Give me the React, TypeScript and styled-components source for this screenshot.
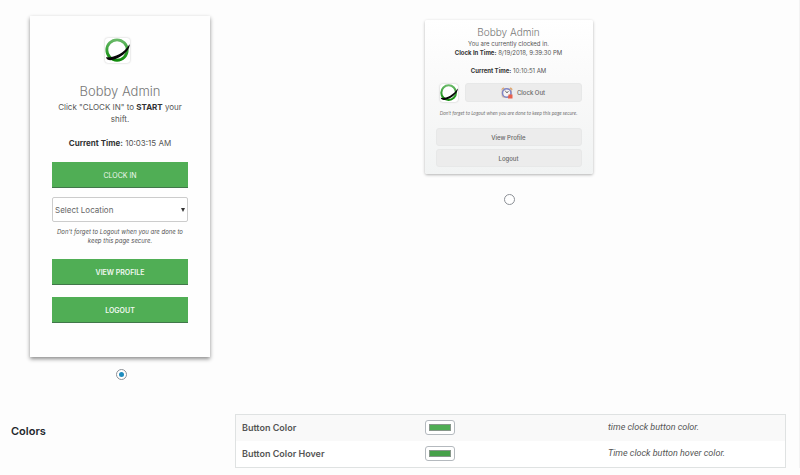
import React from 'react';
import styled, { createGlobalStyle } from 'styled-components';

const GlobalStyle = createGlobalStyle`
  * { box-sizing: border-box; }
  body {
    margin: 0;
    background: #fdfdfd;
    color: #555;
    font-family: Inter, "Liberation Sans", sans-serif;
  }
  button, select, input { font-family: inherit; margin: 0; }
`;

const Page = styled.main`
  display: flex;
  flex-direction: column;
  gap: 34px;
  padding-top: 16px;
  border-right: 1px solid #f3f3f3;
`;

const Styles = styled.section`
  display: grid;
  grid-template-columns: 1fr 1fr;
  column-gap: 20px;
  align-items: start;
  padding-left: 30px;
`;

const Option = styled.div<{ $width: number; $top?: number; $gap: number }>`
  display: flex;
  flex-direction: column;
  align-items: center;
  width: ${(p) => p.$width}px;
  padding-top: ${(p) => p.$top ?? 0}px;
  gap: ${(p) => p.$gap}px;
`;

const Radio = styled.input`
  appearance: none;
  display: grid;
  place-items: center;
  width: 11px;
  height: 11px;
  margin-left: 2px !important;
  border: 1px solid #8c9096;
  border-radius: 50%;
  background: #fff;
  &:checked::before {
    content: "";
    width: 5px;
    height: 5px;
    border-radius: 50%;
    background: #1e8cbe;
  }
`;

const TallCard = styled.article`
  display: flex;
  flex-direction: column;
  align-items: center;
  width: 100%;
  padding: 22px 22px 34px;
  background: #fefefe;
  box-shadow: 0 2px 4px rgba(0, 0, 0, 0.45);
  text-align: center;
`;

const CompactCard = styled.article`
  display: flex;
  flex-direction: column;
  width: 100%;
  padding: 5px 11px 7px;
  border-radius: 2px;
  background: linear-gradient(#ffffff, #f9f9f9 45%, #f1f3f3);
  box-shadow: 0 1px 3px rgba(0, 0, 0, 0.3);
  text-align: center;
`;

const LogoSlot = styled.div`
  display: flex;
  padding-right: 5px;
`;

const LogoSvg = styled.svg<{ $size: number }>`
  flex: none;
  width: ${(p) => p.$size}px;
  height: ${(p) => p.$size}px;
  border-radius: 3px;
  background: #fff;
  box-shadow: 0 0 2px rgba(0, 0, 0, 0.25);
`;

const UserName = styled.h2<{ $size: number; $line: number }>`
  margin: 0;
  color: #777;
  font-size: ${(p) => p.$size}px;
  line-height: ${(p) => p.$line}px;
  font-weight: 300;
`;

const Message = styled.p<{ $size: number; $line: number }>`
  margin: 0;
  font-size: ${(p) => p.$size}px;
  line-height: ${(p) => p.$line}px;
  strong { color: #333; font-weight: 700; }
`;

const Note = styled.p<{ $compact?: boolean }>`
  margin: 0;
  padding-top: ${(p) => (p.$compact ? 3 : 5)}px;
  color: ${(p) => (p.$compact ? '#777' : '#555')};
  font-family: ${(p) => (p.$compact ? 'Lato, sans-serif' : 'inherit')};
  font-size: ${(p) => (p.$compact ? 5 : 6)}px;
  line-height: 9px;
  font-style: italic;
  white-space: nowrap;
`;

const GreenButton = styled.button<{ $weight: number }>`
  width: 100%;
  height: 26px;
  padding: 1px 0 0;
  border: 0;
  border-bottom: 1px solid #41774a;
  background: #50ae55;
  color: #f0f8f0;
  font-size: 7px;
  font-weight: ${(p) => p.$weight};
`;

const TallTop = styled.div`
  display: flex;
  flex-direction: column;
  gap: 12px;
  padding: 18px 0 13px;
`;

const TallActions = styled.div`
  display: flex;
  flex-direction: column;
  gap: 9px;
  width: 100%;
`;

const TallLinks = styled.div`
  display: flex;
  flex-direction: column;
  gap: 12px;
  width: 100%;
  padding-top: 14px;
`;

const SelectBox = styled.div`
  position: relative;
  display: flex;
  svg {
    position: absolute;
    top: 50%;
    right: 3px;
    width: 4px;
    height: 4px;
    transform: translateY(-50%);
    pointer-events: none;
  }
`;

const Select = styled.select`
  appearance: none;
  width: 100%;
  height: 25px;
  padding: 0 10px 0 2px;
  border: 1px solid #ccc;
  border-radius: 2px;
  background: #fff;
  color: #666;
  font-size: 8px;
`;

const GreyButton = styled.button<{ $tall?: boolean }>`
  display: flex;
  flex: 1;
  align-items: center;
  justify-content: center;
  gap: 4px;
  min-height: ${(p) => (p.$tall ? 19 : 18)}px;
  padding: 0;
  border: 1px solid #e7e8e8;
  border-radius: 3px;
  background: #ececec;
  color: #666;
  font-size: 6px;
  font-weight: 500;
`;

const ClockSvg = styled.svg`
  width: 12px;
  height: 12px;
`;

const ClockRow = styled.div`
  display: flex;
  align-items: center;
  gap: 7px;
  padding: 8px 0 4px 4px;
`;

const CompactLinks = styled.div`
  display: flex;
  flex-direction: column;
  gap: 3px;
  padding-top: 10px;
`;

const Settings = styled.section`
  display: grid;
  grid-template-columns: 224px 1fr;
  padding: 0 13px 0 11px;
`;

const SettingsTitle = styled.h3`
  margin: 0;
  padding-top: 10px;
  color: #23282d;
  font-size: 11px;
  line-height: 14px;
  font-weight: 600;
`;

const ColorTable = styled.table`
  width: 100%;
  table-layout: fixed;
  border-spacing: 0;
  border: 1px solid #dfe2e2;
  background: #fff;
`;

const ColorRow = styled.tr`
  height: 26px;
  &:nth-child(odd) { background: #f9f9f9; }
  th, td {
    padding: 0 6px 1px;
    font-size: 9px;
    line-height: 12px;
    text-align: left;
  }
  th { font-weight: 600; }
  td:last-child {
    padding-bottom: 3px;
    font-family: Roboto, sans-serif;
    font-style: italic;
  }
`;

const Swatch = styled.input`
  appearance: none;
  display: block;
  width: 30px;
  height: 15px;
  padding: 3px;
  border: 1px solid #b4b9be;
  border-radius: 3px;
  background: #fff;
  &::-webkit-color-swatch-wrapper { padding: 0; }
  &::-webkit-color-swatch { border: 1px solid #87978a; border-radius: 0; }
`;

function Logo({ size, id }: { size: number; id: string }) {
  return (
    <LogoSvg $size={size} viewBox="0 0 26 26" role="img" aria-label="Company logo">
      <defs>
        <linearGradient id={id} x1="0" y1="0" x2="0" y2="1">
          <stop offset="0" stopColor="#69b968" />
          <stop offset="0.5" stopColor="#39a238" />
          <stop offset="1" stopColor="#128c0d" />
        </linearGradient>
      </defs>
      <circle cx="12.5" cy="12.5" r="10.6" fill="none" stroke={`url(#${id})`} strokeWidth="3" />
      <path d="M1 20 C8 21 19 17 25.500 6.5 C27 12 16 21.5 7 23 C4 23.4 1.500 22.500 1 20 Z" fill="#080808" />
    </LogoSvg>
  );
}

function ClockIcon() {
  return (
    <ClockSvg viewBox="0 0 24 24" aria-hidden="true">
      <path d="M2 6 L6 2 M18 2 L22 6" stroke="#dfa265" strokeWidth="4" />
      <rect x="1" y="3" width="21" height="19" rx="6" fill="#d9c4b0" />
      <circle cx="11.500" cy="12" r="8.500" fill="#f5f3f3" stroke="#7f86c6" strokeWidth="3" />
      <path d="M8 7 L12 12 L15 8" fill="none" stroke="#777" strokeWidth="2" />
      <path d="M15 15 H23 V23 H14 Z" fill="#e8604c" />
    </ClockSvg>
  );
}

const colors = [
  { id: 'button-color', label: 'Button Color', value: '#50ae55', help: 'time clock button color.' },
  { id: 'button-hover', label: 'Button Color Hover', value: '#46a049', help: 'Time clock button hover color.' },
];

export default function App() {
  return (
    <>
      <GlobalStyle />
      <Page>
        <Styles>
          <Option $width={180} $gap={12}>
            <TallCard>
              <LogoSlot>
                <Logo size={25} id="ring-tall" />
              </LogoSlot>
              <TallTop>
                <div>
                  <UserName $size={13} $line={20}>Bobby Admin</UserName>
                  <Message $size={8} $line={12}>
                    Click "CLOCK IN" to <strong>START</strong> your<br />shift.
                  </Message>
                </div>
                <Message $size={8} $line={12}>
                  <strong>Current Time:</strong> 10:03:15 AM
                </Message>
              </TallTop>
              <TallActions>
                <GreenButton type="button" $weight={400}>CLOCK IN</GreenButton>
                <SelectBox>
                  <Select aria-label="Select Location">
                    <option>Select Location</option>
                  </Select>
                  <svg viewBox="0 0 4 4" aria-hidden="true"><path d="M0 0 H4 L2 4 Z" fill="#333" /></svg>
                </SelectBox>
              </TallActions>
              <Note>
                Don't forget to Logout when you are done to<br />keep this page secure.
              </Note>
              <TallLinks>
                <GreenButton type="button" $weight={600}>VIEW PROFILE</GreenButton>
                <GreenButton type="button" $weight={600}>LOGOUT</GreenButton>
              </TallLinks>
            </TallCard>
            <Radio type="radio" name="clock-style" aria-label="Tall style" defaultChecked />
          </Option>
          <Option $width={168} $top={4} $gap={20}>
            <CompactCard>
              <UserName $size={10} $line={14}>Bobby Admin</UserName>
              <Message $size={6} $line={9}>
                You are currently clocked in.<br />
                <strong>Clock In Time:</strong> 8/19/2018, 9:39:30 PM<br />
                <br />
                <strong>Current Time:</strong> 10:10:51 AM
              </Message>
              <ClockRow>
                <Logo size={18} id="ring-compact" />
                <GreyButton type="button" $tall><ClockIcon />Clock Out</GreyButton>
              </ClockRow>
              <Note $compact>Don't forget to Logout when you are done to keep this page secure.</Note>
              <CompactLinks>
                <GreyButton type="button">View Profile</GreyButton>
                <GreyButton type="button">Logout</GreyButton>
              </CompactLinks>
            </CompactCard>
            <Radio type="radio" name="clock-style" aria-label="Compact style" />
          </Option>
        </Styles>
        <Settings>
          <SettingsTitle>Colors</SettingsTitle>
          <ColorTable>
            <tbody>
              {colors.map((c) => (
                <ColorRow key={c.id}>
                  <th scope="row"><label htmlFor={c.id}>{c.label}</label></th>
                  <td><Swatch type="color" id={c.id} defaultValue={c.value} /></td>
                  <td>{c.help}</td>
                </ColorRow>
              ))}
            </tbody>
          </ColorTable>
        </Settings>
      </Page>
    </>
  );
}
